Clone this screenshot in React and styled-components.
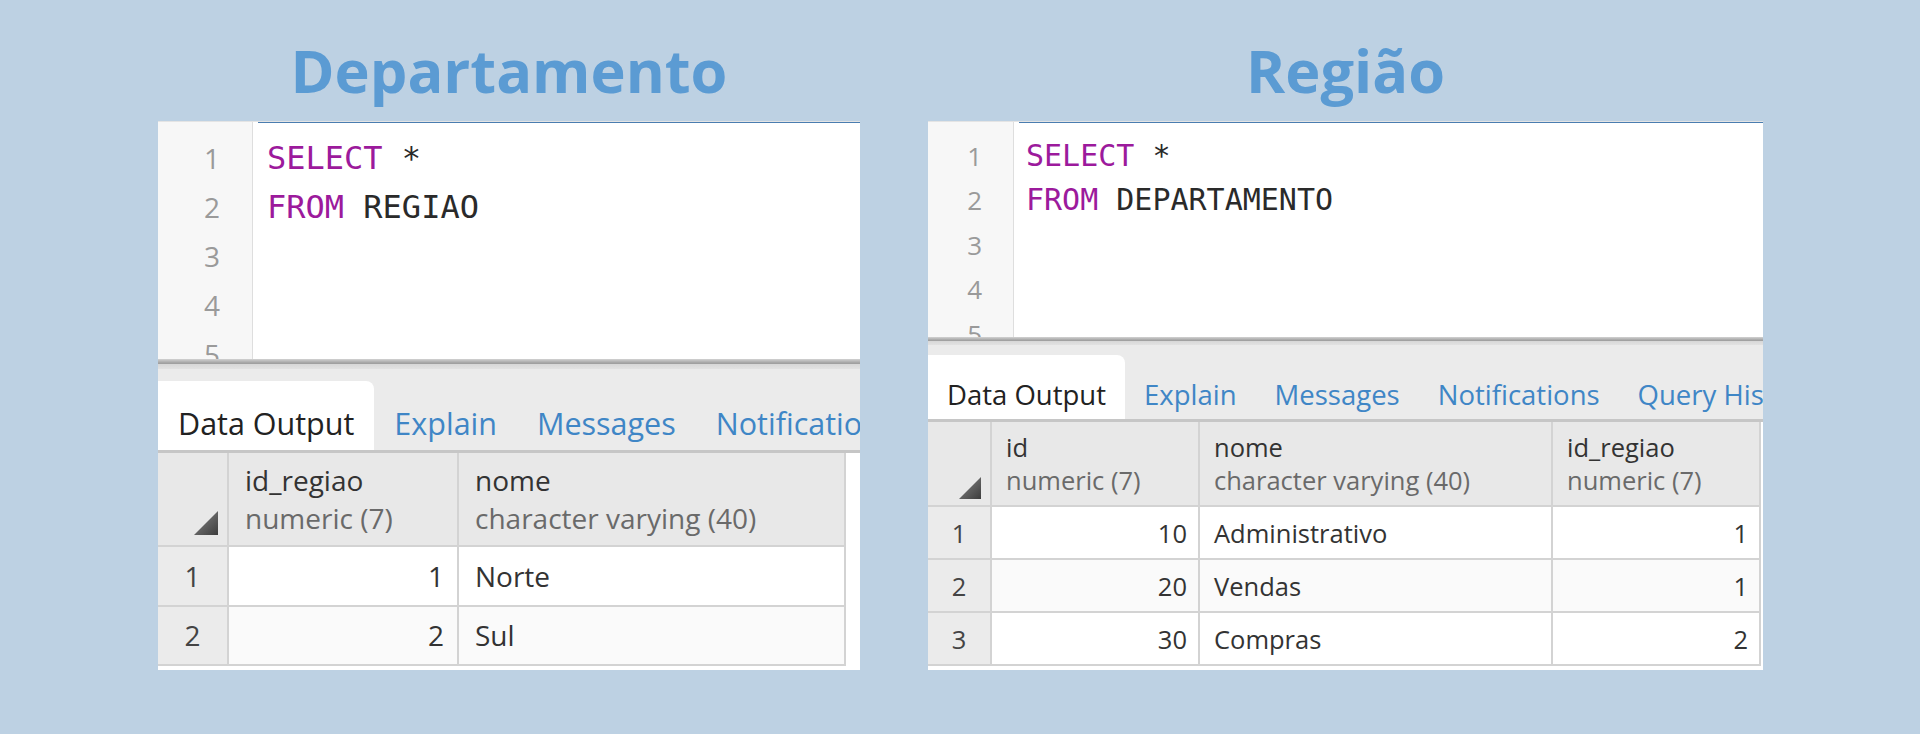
import React from "react";
import styled, { createGlobalStyle, ThemeProvider } from "styled-components";

const GlobalStyle = createGlobalStyle`
  html, body {
    margin: 0;
    padding: 0;
    background: #bdd1e3;
  }
  body {
    font-family: "Open Sans", "Noto Sans", sans-serif;
  }
`;

// two screenshots, two slightly different scales
const left = {
  width: 702,
  editorH: 237,
  gutterW: 95,
  gutterPad: 32,
  lineH: 49,
  code: 32,
  num: 28,
  codeTop: 12,
  codeLeft: 14,
  splitH: 10,
  tabBarH: 81,
  tabH: 69,
  tabFont: 30.5,
  tabLine: 40,
  tabTop: 22,
  tabPadX: 20,
  headH: 94,
  headTop: 8,
  headLine: 38,
  rowH: 59.5,
  gridFont: 28,
  cols: [71, 230, 387],
  cellPad: 16,
  numPad: 13,
  sortSize: 24,
  sortPad: [10, 9],
};

const right = {
  width: 835,
  editorH: 215,
  gutterW: 86,
  gutterPad: 31,
  lineH: 44.5,
  code: 30,
  num: 26,
  codeTop: 11.5,
  codeLeft: 12,
  splitH: 8,
  tabBarH: 74,
  tabH: 64,
  tabFont: 27.5,
  tabLine: 37,
  tabTop: 21,
  tabPadX: 19,
  headH: 85,
  headTop: 9,
  headLine: 33,
  rowH: 53,
  gridFont: 25.5,
  cols: [64, 208, 353, 208],
  cellPad: 14,
  numPad: 11,
  sortSize: 22,
  sortPad: [6, 9],
};

const panels = [
  {
    title: "Departamento",
    theme: left,
    code: [["SELECT", "*"], ["FROM", "REGIAO"], [], [], []],
    tabs: ["Data Output", "Explain", "Messages", "Notifications"],
    columns: [
      { name: "id_regiao", type: "numeric (7)", num: true },
      { name: "nome", type: "character varying (40)" },
    ],
    rows: [
      [1, "Norte"],
      [2, "Sul"],
    ],
  },
  {
    title: "Região",
    theme: right,
    code: [["SELECT", "*"], ["FROM", "DEPARTAMENTO"], [], [], []],
    tabs: ["Data Output", "Explain", "Messages", "Notifications", "Query History"],
    columns: [
      { name: "id", type: "numeric (7)", num: true },
      { name: "nome", type: "character varying (40)" },
      { name: "id_regiao", type: "numeric (7)", num: true },
    ],
    rows: [
      [10, "Administrativo", 1],
      [20, "Vendas", 1],
      [30, "Compras", 2],
    ],
  },
];

const Page = styled.div`
  display: flex;
  gap: 68px;
  padding: 0 0 0 158px;
  height: 734px;
  box-sizing: border-box;
`;

const Column = styled.div`
  display: flex;
  flex-direction: column;
  width: ${(p) => p.theme.width}px;
`;

const Title = styled.h1`
  margin: 0;
  padding-top: 29px;
  height: 92px;
  line-height: 81px;
  text-align: center;
  font-family: "Open Sans", sans-serif;
  font-weight: 700;
  font-size: 59.5px;
  color: #5b9bd3;
`;

const Panel = styled.div`
  background: #fff;
  display: flex;
  flex-direction: column;
  padding-bottom: 4px;
`;

const Editor = styled.div`
  display: flex;
  height: ${(p) => p.theme.editorH}px;
  overflow: hidden;
  border-top: 1px solid #e4e4e4;
`;

const Gutter = styled.div`
  width: ${(p) => p.theme.gutterW}px;
  flex: none;
  box-sizing: border-box;
  background: #f7f7f7;
  border-right: 1px solid #dedede;
  padding: ${(p) => p.theme.codeTop}px ${(p) => p.theme.gutterPad}px 0 0;
  text-align: right;
  font-family: "Open Sans", sans-serif;
  font-size: ${(p) => p.theme.num}px;
  line-height: ${(p) => p.theme.lineH}px;
  color: #9a9a9a;
`;

const Code = styled.div`
  flex: 1;
  margin-left: 5px;
  border-top: 2px solid #4a7db0;
  margin-top: -1px;
  padding: ${(p) => p.theme.codeTop - 1}px 0 0 ${(p) => p.theme.codeLeft - 5}px;
  font-family: "DejaVu Sans Mono", "Liberation Mono", monospace;
  font-size: ${(p) => p.theme.code}px;
  line-height: ${(p) => p.theme.lineH}px;
  color: #2a2a2a;
  white-space: pre;
`;

const Line = styled.div`
  height: ${(p) => p.theme.lineH}px;
`;

const Keyword = styled.span`
  color: #9c1a9c;
`;

const Splitter = styled.div`
  height: ${(p) => p.theme.splitH}px;
  background: linear-gradient(
    #d2d2d2 0,
    #a8a8a8 35%,
    #9c9c9c 50%,
    #d8d8d8 55%,
    #e2e2e2 100%
  );
`;

const TabBar = styled.div`
  display: flex;
  align-items: flex-end;
  height: ${(p) => p.theme.tabBarH}px;
  background: #ebebeb;
  border-bottom: 3px solid #c6c6c6;
  overflow: hidden;
  white-space: nowrap;
`;

const Tab = styled.div`
  flex: none;
  height: ${(p) => p.theme.tabH}px;
  box-sizing: border-box;
  padding: ${(p) => p.theme.tabTop}px ${(p) => p.theme.tabPadX}px 0;
  font-size: ${(p) => p.theme.tabFont}px;
  line-height: ${(p) => p.theme.tabLine}px;
  border-radius: 0 8px 0 0;
  background: ${(p) => (p.$active ? "#fff" : "transparent")};
  color: ${(p) => (p.$active ? "#222" : "#3f86c6")};
`;

const Grid = styled.div`
  display: grid;
  grid-template-columns: ${(p) => p.theme.cols.map((c) => c + "px").join(" ")};
  grid-template-rows: ${(p) => p.theme.headH}px;
  grid-auto-rows: ${(p) => p.theme.rowH}px;
  font-size: ${(p) => p.theme.gridFont}px;
  color: #333;
`;

const HeadCell = styled.div`
  background: #e8e8e8;
  border-right: 2px solid #d3d3d3;
  border-bottom: 2px solid #d3d3d3;
  padding: ${(p) => p.theme.headTop}px 0 0 ${(p) => p.theme.cellPad}px;
  line-height: ${(p) => p.theme.headLine}px;
  overflow: hidden;
  white-space: nowrap;
`;

const ColName = styled.div`
  color: #333;
`;

const ColType = styled.div`
  color: #6a6a6a;
`;

const Corner = styled.div`
  display: flex;
  align-items: flex-end;
  justify-content: flex-end;
  background: #e8e8e8;
  border-right: 2px solid #d3d3d3;
  border-bottom: 2px solid #d3d3d3;
  padding: 0 ${(p) => p.theme.sortPad[1]}px ${(p) => p.theme.sortPad[0]}px 0;
`;

const RowNum = styled.div`
  display: flex;
  align-items: center;
  justify-content: center;
  background: #ebebeb;
  border-right: 2px solid #d3d3d3;
  border-bottom: 2px solid #d3d3d3;
  color: #444;
`;

const Cell = styled.div`
  display: flex;
  align-items: center;
  justify-content: ${(p) => (p.$num ? "flex-end" : "flex-start")};
  padding: 0 ${(p) => (p.$num ? p.theme.numPad : 0)}px 0
    ${(p) => (p.$num ? 0 : p.theme.cellPad)}px;
  background: ${(p) => (p.$odd ? "#fafafa" : "#fff")};
  border-right: 2px solid #d3d3d3;
  border-bottom: 2px solid #d3d3d3;
  color: #333;
  white-space: nowrap;
`;

const SortMark = ({ size }) => (
  <svg width={size} height={size} viewBox="0 0 24 24">
    <defs>
      <linearGradient id="sortg" x1="0" y1="0" x2="1" y2="1">
        <stop offset="0" stopColor="#8a8a8a" />
        <stop offset="1" stopColor="#3c3c3c" />
      </linearGradient>
    </defs>
    <polygon points="24,0 24,24 0,24" fill="url(#sortg)" />
  </svg>
);

const QueryPanel = ({ data }) => (
  <ThemeProvider theme={data.theme}>
    <Column>
      <Title>{data.title}</Title>
      <Panel>
        <Editor>
          <Gutter>
            {data.code.map((_, i) => (
              <Line key={i}>{i + 1}</Line>
            ))}
          </Gutter>
          <Code>
            {data.code.map((l, i) => (
              <Line key={i}>
                {l.length > 0 && (
                  <>
                    <Keyword>{l[0]}</Keyword> {l[1]}
                  </>
                )}
              </Line>
            ))}
          </Code>
        </Editor>
        <Splitter />
        <TabBar>
          {data.tabs.map((t, i) => (
            <Tab key={t} $active={i === 0}>
              {t}
            </Tab>
          ))}
        </TabBar>
        <Grid>
          <Corner>
            <SortMark size={data.theme.sortSize} />
          </Corner>
          {data.columns.map((c) => (
            <HeadCell key={c.name}>
              <ColName>{c.name}</ColName>
              <ColType>{c.type}</ColType>
            </HeadCell>
          ))}
          {data.rows.map((r, i) => (
            <React.Fragment key={i}>
              <RowNum>{i + 1}</RowNum>
              {r.map((v, j) => (
                <Cell key={j} $num={data.columns[j].num} $odd={i % 2 === 1}>
                  {v}
                </Cell>
              ))}
            </React.Fragment>
          ))}
        </Grid>
      </Panel>
    </Column>
  </ThemeProvider>
);

export default function App() {
  return (
    <>
      <GlobalStyle />
      <Page>
        {panels.map((p) => (
          <QueryPanel key={p.title} data={p} />
        ))}
      </Page>
    </>
  );
}
